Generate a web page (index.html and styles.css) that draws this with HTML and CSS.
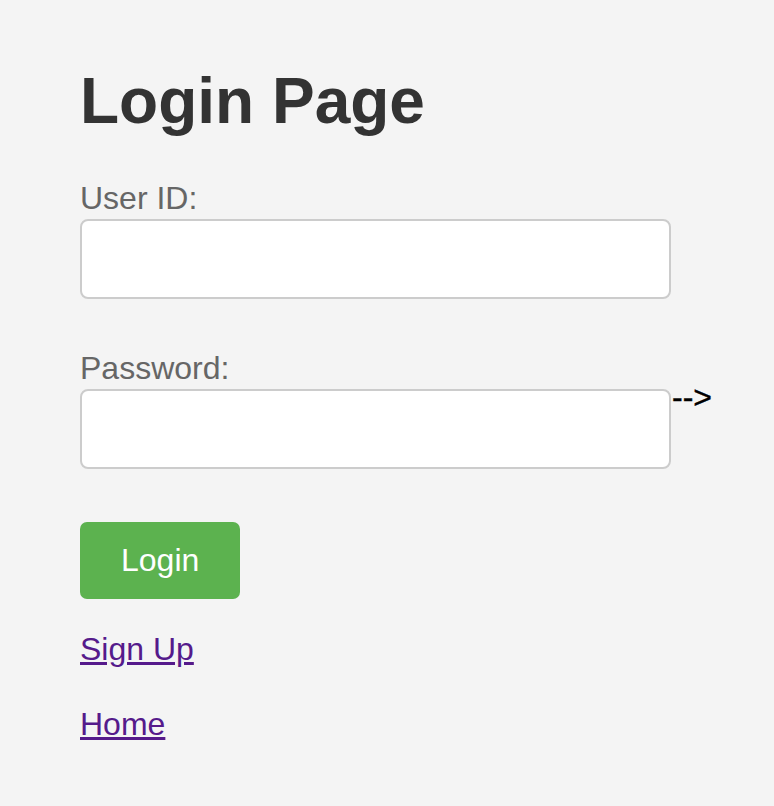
FILE: index.html
```html
<!DOCTYPE html>
<html lang="en">
<head>
<meta charset="utf-8">
<title>Login Page</title>
<link rel="stylesheet" href="styles.css">
</head>
<body class="page">
<main class="login">
  <h1 class="title">Login Page</h1>
  <form class="form" action="#">
    <label class="label" for="uid">User ID:</label>
    <input class="field" id="uid" type="text">
    <label class="label label-pw" for="pw">Password:</label>
    <div class="pw-row"><input class="field" id="pw" type="password"><span class="stray">--&gt;</span></div>
    <button class="btn" type="button">Login</button>
  </form>
  <a class="link link-signup" href="#signup">Sign Up</a>
  <a class="link link-home" href="#home">Home</a>
</main>
</body>
</html>
```
FILE: styles.css
```css
html, body {
  margin: 0;
  padding: 0;
}
.page {
  background: #f4f4f4;
  font-family: "Liberation Sans", Arial, sans-serif;
  color: #000;
}
.login {
  display: flex;
  flex-direction: column;
  align-items: flex-start;
  padding: 64px 0 0 80px;
}
.title {
  margin: 0;
  font-size: 64px;
  font-weight: bold;
  line-height: normal;
  color: #333;
}
.form {
  display: flex;
  flex-direction: column;
  align-items: flex-start;
  margin: 42px 0 0 0;
}
.label {
  display: block;
  font-size: 32px;
  line-height: normal;
  color: #666;
}
.label-pw {
  margin-top: 51px;
}
.field {
  box-sizing: border-box;
  width: 591px;
  height: 80px;
  margin: 2px 0 0 0;
  border: 2px solid #ccc;
  border-radius: 8px;
  background: #fff;
  font: inherit;
  font-size: 32px;
  padding: 0 16px;
}
.pw-row {
  display: flex;
  align-items: flex-start;
  margin-top: 2px;
}
.pw-row .field {
  margin-top: 0;
}
.stray {
  margin-left: 1px;
  font-size: 32px;
  font-weight: normal;
  line-height: 17px;
  color: #000;
  -webkit-text-stroke: 0.4px #000;
}
.btn {
  margin-top: 53px;
  padding: 20px 41px;
  border: none;
  border-radius: 7px;
  background: #5cb24f;
  color: #fff;
  font-family: inherit;
  font-size: 32px;
  line-height: normal;
  cursor: pointer;
}
.link {
  display: block;
  font-size: 32px;
  line-height: normal;
  color: #551a8b;
  text-decoration: underline;
}
.link-signup {
  margin-top: 32px;
}
.link-home {
  margin-top: 38px;
}
```
